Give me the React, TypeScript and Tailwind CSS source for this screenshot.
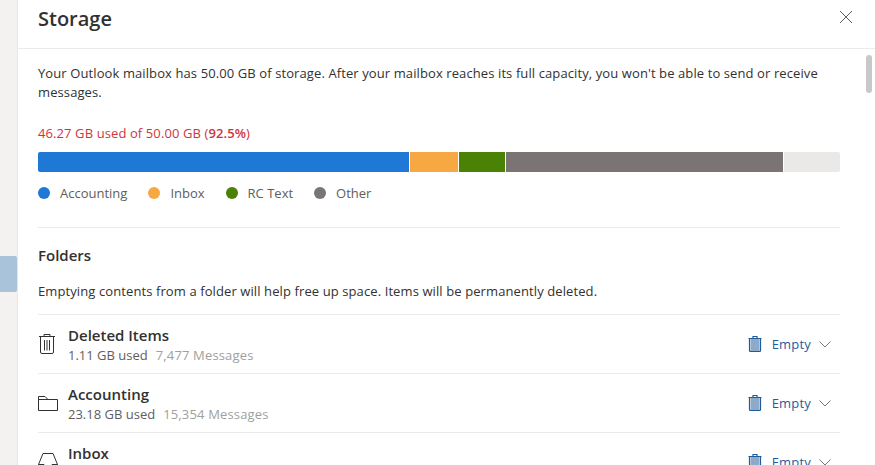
import React from 'react';

const font = { fontFamily: '"Open Sans", sans-serif' };

const TrashIcon = () => (
  <svg width="16" height="20" viewBox="0 0 16 20" fill="none" stroke="#323130" strokeWidth="1">
    <path d="M0 2.500h16M5 2.500V.5h6v2M1.500 2.500v15.500a1.500 1.500 0 0 0 1.500 1.500h10a1.500 1.500 0 0 0 1.500-1.500V2.500" />
    <path d="M5.500 6v10.500M8 6v10.500M10.500 6v10.500" />
  </svg>
);

const FolderIcon = () => (
  <svg width="20" height="15" viewBox="0 0 20 15" fill="none" stroke="#323130" strokeWidth="1">
    <path d="M.5 14.500V.5h6.500l3 3h9.500v11z" />
    <path d="M.5 3.500h9.500" />
  </svg>
);

const InboxIcon = () => (
  <svg width="20" height="20" viewBox="0 0 20 20" fill="none" stroke="#323130" strokeWidth="1">
    <path d="M.5 12.500 5 1.500h10l4.500 11v7H.5zM.5 12.500h5.500a4 4 0 0 0 8 0h5.500" />
  </svg>
);

const EmptyIcon = () => (
  <svg width="14" height="16" viewBox="0 0 14 16" fill="none" stroke="#1f5c9e" strokeWidth="1">
    <rect x="2.500" y="3" width="9" height="12" fill="#8fa9c8" stroke="none" />
    <path d="M.5 2.500h13M5 2.500V.5h4v2M1.500 2.500v12a1 1 0 0 0 1 1h9a1 1 0 0 0 1-1v-12" strokeWidth="1.200" />
  </svg>
);

const Chevron = () => (
  <svg width="12" height="7" viewBox="0 0 12 7" fill="none" stroke="#7a7876" strokeWidth="1">
    <path d="M.5.5 6 6 11.500.5" />
  </svg>
);

const legend = [
  { label: 'Accounting', color: 'bg-[#1f78d6]' },
  { label: 'Inbox', color: 'bg-[#f7a843]' },
  { label: 'RC Text', color: 'bg-[#498205]' },
  { label: 'Other', color: 'bg-[#7a7574]' },
];

// the Inbox stats line sits below the fold in the screenshot, so it stays blank
const folders = [
  { name: 'Deleted Items', used: '1.11 GB used', count: '7,477 Messages', icon: <span className="ml-px flex"><TrashIcon /></span> },
  { name: 'Accounting', used: '23.18 GB used', count: '15,354 Messages', icon: <FolderIcon /> },
  { name: 'Inbox', used: '', count: '', icon: <InboxIcon /> },
];

export default function App() {
  return (
    <div className="flex h-[465px] w-[875px] overflow-hidden bg-white text-[#323130]" style={font}>
      <div className="flex w-[18px] shrink-0 flex-col border-r border-[#e8e6e4] bg-[#f3f2f1] pt-[256px]">
        <div className="h-[36px] w-[17px] rounded-r-[2px] bg-[#a9c3da]" />
      </div>

      <div className="flex min-w-0 flex-1 flex-col">
        <div className="flex h-[49px] shrink-0 items-start justify-between border-b border-[#edebe9] pl-[20px] pr-[22px]">
          <h1 className="mt-[5px] text-[20px] leading-[28px] font-semibold">Storage</h1>
          <svg className="mt-[10px]" width="14" height="14" viewBox="0 0 14 14" fill="none" stroke="#605e5c" strokeWidth="1">
            <path d="M1 1l12 12M13 1 1 13" />
          </svg>
        </div>

        <div className="flex min-h-0 flex-1">
          <div className="w-[822px] shrink-0 pl-[20px]">
            <p className="mt-[15px] max-w-[790px] text-[13px] leading-[19px] tracking-[0.1px]">
              Your Outlook mailbox has 50.00 GB of storage. After your mailbox reaches its full capacity, you won't be able to send or receive messages.
            </p>

            <p className="mt-[22px] text-[13px] leading-[19px] tracking-[0.1px] text-[#d13438]">
              46.27 GB used of 50.00 GB (<span className="font-semibold">92.5%</span>)
            </p>

            <div className="mt-[9px] flex h-[20px] gap-px overflow-hidden rounded-[2px]">
              <div className="w-[371px] bg-[#1f78d6]" />
              <div className="w-[48px] bg-[#f7a843]" />
              <div className="w-[46px] bg-[#498205]" />
              <div className="w-[277px] bg-[#7a7574]" />
              <div className="flex-1 bg-[#ebe9e7]" />
            </div>

            <div className="mt-[11px] flex h-[20px] items-center gap-[21px]">
              {legend.map((l) => (
                <div key={l.label} className="flex items-center gap-[10px]">
                  <span className={`h-[12px] w-[12px] rounded-full ${l.color}`} />
                  <span className="text-[13px] leading-[20px] text-[#605e5c]">{l.label}</span>
                </div>
              ))}
            </div>

            <div className="mt-[24px] border-t border-[#edebe9] pt-[17px]">
              <h2 className="text-[15px] leading-[20px] font-semibold">Folders</h2>
              <p className="mt-[17px] text-[13px] leading-[19px] tracking-[0.1px]">
                Emptying contents from a folder will help free up space. Items will be permanently deleted.
              </p>
            </div>

            <div className="mt-[13px]">
              {folders.map((f) => (
                <div key={f.name} className="flex h-[59px] items-center border-t border-[#edebe9]">
                  <div className="flex w-[30px] shrink-0 justify-start">{f.icon}</div>
                  <div className="flex-1 pt-[2px]">
                    <div className="text-[15px] leading-[20px] font-semibold">{f.name}</div>
                    <div className="mt-[1px] h-[19px] text-[13px] leading-[19px] text-[#605e5c]">
                      {f.used}
                      {f.count && <span className="ml-[8px] tracking-[0.15px] text-[#a19f9d]">{f.count}</span>}
                    </div>
                  </div>
                  <div className="flex items-center pr-[9px]">
                    <EmptyIcon />
                    <span className="ml-[10px] text-[13px] leading-[20px] tracking-[0.2px] text-[#1f5c9e]">Empty</span>
                    <span className="ml-[8px] flex"><Chevron /></span>
                  </div>
                </div>
              ))}
            </div>
          </div>

          <div className="ml-[26px] mt-[6px] h-[38px] w-[6px] rounded-full bg-[#c8c8c8]" />
        </div>
      </div>
    </div>
  );
}
